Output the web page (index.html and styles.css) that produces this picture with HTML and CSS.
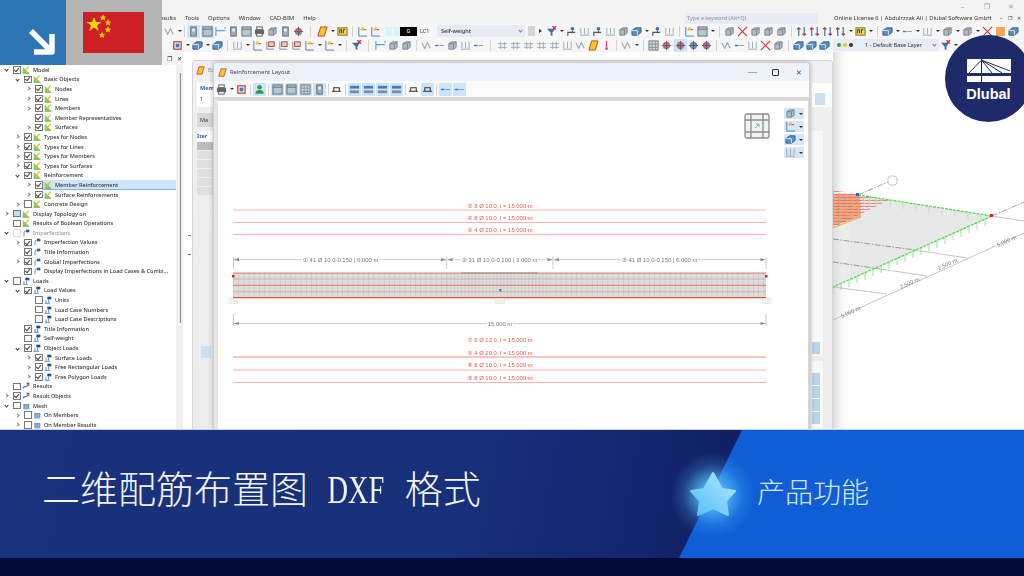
FILE: index.html
```html
<!DOCTYPE html>
<html lang="zh">
<head>
    <meta charset="UTF-8">
    <title>二维配筋布置图 DXF 格式</title>
    <link rel="stylesheet" href="styles.css">
</head>
<body>
    <svg class="defs" width="0" height="0">
        <symbol id="col" viewBox="0 0 12 12"><rect x="3" y="1" width="6" height="10" fill="#9fb0bd" stroke="#5c6b78"/><rect x="4.5" y="3" width="3" height="3" fill="#e4edf3"/></symbol>
        <symbol id="grid" viewBox="0 0 12 12"><rect x="1" y="1" width="10" height="10" fill="#b7c6d2" stroke="#5c6b78"/><path d="M1 3.5h10" stroke="#5c6b78"/></symbol>
        <symbol id="beam" viewBox="0 0 12 12"><path d="M1 1v10M1 5h10M11 1v2" fill="none" stroke="#5f9fd1" stroke-width="1.2"/></symbol>
        <symbol id="box" viewBox="0 0 12 12"><path d="M2 4l3-2h5v6l-3 2H2z" fill="#aebac4" stroke="#7a8894"/><path d="M2 4h5v6M7 4l3-2" fill="none" stroke="#7a8894"/></symbol>
        <symbol id="blue3d" viewBox="0 0 12 12"><path d="M1 5l4-3h6v5l-4 3H1z" fill="#5b8fc0" stroke="#2f5f8d"/><path d="M1 5h6v5" fill="none" stroke="#dbe8f3"/></symbol>
        <symbol id="print" viewBox="0 0 12 12"><rect x="3" y="1" width="6" height="3" fill="#fff" stroke="#555"/><rect x="1" y="4" width="10" height="5" fill="#666"/><rect x="3" y="8" width="6" height="3" fill="#fff" stroke="#555"/></symbol>
        <symbol id="shape" viewBox="0 0 12 12"><path d="M4 1h7l-3 10H1z" fill="#f0c92c" stroke="#d2382b"/></symbol>
        <symbol id="ybox" viewBox="0 0 12 12"><rect x="1" y="2" width="10" height="8" fill="#f4d65a" stroke="#7a6a20"/><path d="M3 8V4h2v4M7 8V4h2" fill="none" stroke="#333"/></symbol>
        <symbol id="axes" viewBox="0 0 12 12"><path d="M2 1v10h9" fill="none" stroke="#3f7fb6"/><path d="M4 4h6" stroke="#d2382b"/><circle cx="6" cy="3" r="1.6" fill="#f0c92c"/></symbol>
        <symbol id="filter" viewBox="0 0 12 12"><path d="M1 3h9L7 7v4L5 10V7z" fill="#2f73b5"/><path d="M7 0l4 4M11 0L7 4" stroke="#e02a24" stroke-width="1.4"/></symbol>
        <symbol id="user" viewBox="0 0 12 12"><circle cx="7" cy="3" r="2" fill="#2f73b5"/><path d="M2 11V7h8M7 5v3" fill="none" stroke="#556" stroke-width="1.2"/></symbol>
        <symbol id="green" viewBox="0 0 12 12"><circle cx="6" cy="3.500" r="2.500" fill="#2f9a4a"/><path d="M1.500 10.500c0-3 2-4 4.500-4s4.500 1 4.500 4z" fill="#2f9a4a"/></symbol>
        <symbol id="ticks" viewBox="0 0 12 12"><path d="M2 2v7M6 2v7M10 2v7M1 10h10" fill="none" stroke="#99a7b2"/></symbol>
        <symbol id="xyz" viewBox="0 0 12 12"><path d="M3 1v10M9 1v10" stroke="#3f7fb6" stroke-width="1.4"/><path d="M1 3h4M7 9h4" stroke="#d2382b" stroke-width="1.4"/></symbol>
        <symbol id="frame" viewBox="0 0 12 12"><rect x="2" y="2" width="8" height="8" fill="#eef3f7" stroke="#c8352a" stroke-width="1.3"/><rect x="4" y="4" width="4" height="4" fill="#3f7fb6"/></symbol>
        <symbol id="dims" viewBox="0 0 12 12"><path d="M2 2v8h8" fill="none" stroke="#7a8894"/><rect x="4" y="2" width="6" height="5" fill="#c9d6df" stroke="#c8352a"/></symbol>
        <symbol id="zig" viewBox="0 0 12 12"><path d="M1 3l3 6 3-6 3 6" fill="none" stroke="#9aa6b0" stroke-width="1.2"/></symbol>
        <symbol id="eqs" viewBox="0 0 12 12"><path d="M1 4h10M1 8h10M4 2v8M8 2v8" fill="none" stroke="#a0aab3"/></symbol>
        <symbol id="cross" viewBox="0 0 12 12"><path d="M1 1l10 10M11 1L1 11" stroke="#d2382b" stroke-width="1.2"/></symbol>
        <symbol id="mesh" viewBox="0 0 12 12"><rect x="1" y="1" width="10" height="10" fill="#d2d8de" stroke="#6a7884"/><path d="M1 4.500h10M1 8h10M4.500 1v10M8 1v10" stroke="#6a7884" stroke-width=".7"/></symbol>
        <symbol id="bars" viewBox="0 0 12 12"><rect x="1" y="2" width="10" height="3" fill="#3f7fb6"/><rect x="1" y="7" width="10" height="3" fill="#7a8ea0"/></symbol>
        <symbol id="pink" viewBox="0 0 12 12"><path d="M6 1v7" stroke="#e0407c" stroke-width="1.4"/><circle cx="6" cy="9.500" r="1.500" fill="#e0407c"/></symbol>
        <symbol id="star3d" viewBox="0 0 12 12"><circle cx="6" cy="6" r="4" fill="#5b8fc0"/><path d="M1 6h10M6 1v10" stroke="#c8352a"/></symbol>
        <symbol id="wbeam" viewBox="0 0 12 12"><path d="M1 8h10M3 8V4h6v4" fill="none" stroke="#333" stroke-width="1.1"/></symbol>
        <symbol id="dash" viewBox="0 0 12 12"><path d="M1 6h4" stroke="#3f7fb6" stroke-width="1.5"/><path d="M6 6h5" stroke="#8a97a2"/></symbol>
        <symbol id="tree-model" viewBox="0 0 12 12"><path d="M1 1v10h10z" fill="#8ecb5c"/><path d="M1 11h10" stroke="#4e9a3a"/><path d="M5 7l5-6" stroke="#e8b820" stroke-width="2"/></symbol>
        <symbol id="tree-imp" viewBox="0 0 12 12"><path d="M3 11V6a3 3 0 0 1 3-3" fill="none" stroke="#6a8ea8" stroke-width="1.4"/><rect x="6" y="1" width="5" height="4" fill="#2d5f93"/></symbol>
        <symbol id="tree-load" viewBox="0 0 12 12"><path d="M1 11h8M3 11V6" fill="none" stroke="#3f7fb6" stroke-width="1.2"/><rect x="5" y="1" width="6" height="4" fill="#234f86"/><path d="M7 5v5" stroke="#234f86"/></symbol>
        <symbol id="tree-res" viewBox="0 0 12 12"><path d="M1 9c3-3 6-3 10-4" fill="none" stroke="#2f73b5" stroke-width="1.6"/><rect x="7" y="1" width="4" height="3" fill="#d2382b"/></symbol>
        <symbol id="tree-mesh" viewBox="0 0 12 12"><rect x="2" y="3" width="9" height="8" fill="#5d92c0"/><path d="M2 6h9M2 9h9M5 3v8M8 3v8" stroke="#cfe0ee" stroke-width=".6"/></symbol>
    </svg>

    <div class="screen">
        <div class="titlebar">
            <span class="winbtn">&#8211;</span>
            <span class="winbtn">&#10064;</span>
            <span class="winbtn">&#10005;</span>
        </div>
        <div class="menubar">
            <nav class="menu"><span>esults</span><span>Tools</span><span>Options</span><span>Window</span><span>CAD-BIM</span><span>Help</span></nav>
            <div class="search">Type a keyword (Alt+Q)</div>
            <div class="license">Online License 6 | Abdulrzzak Ali | Dlubal Software GmbH</div>
            <div class="license-btns"><span>&#8211;</span><span>&#10064;</span><span>&#10005;</span></div>
        </div>

        <div class="toolbar row-one">
            <svg class="ic"><use href="#zig"/></svg><i class="dd"></i><i class="sep tight"></i>
            <svg class="ic on"><use href="#col"/></svg><svg class="ic on"><use href="#grid"/></svg>
            <svg class="ic"><use href="#beam"/></svg><svg class="ic"><use href="#col"/></svg><svg class="ic"><use href="#grid"/></svg>
            <svg class="ic"><use href="#print"/></svg><svg class="ic"><use href="#box"/></svg><svg class="ic"><use href="#col"/></svg><svg class="ic"><use href="#star3d"/></svg><i class="sep wide"></i>
            <svg class="ic"><use href="#shape"/></svg><i class="dd"></i><svg class="ic"><use href="#ybox"/></svg><i class="sep"></i>
            <svg class="ic"><use href="#axes"/></svg><svg class="ic"><use href="#axes"/></svg>
            <div class="lc-swatches"><i></i><i></i></div><b class="lc-g">G</b><span class="lc-name">LC1</span>
            <div class="combo lc-combo">Self-weight<i class="chev"></i></div>
            <i class="step grey"></i><i class="step"></i>
            <svg class="ic"><use href="#filter"/></svg><i class="dd"></i>
            <svg class="ic"><use href="#user"/></svg><svg class="ic"><use href="#ticks"/></svg><svg class="ic"><use href="#user"/></svg><svg class="ic"><use href="#ticks"/></svg><svg class="ic"><use href="#box"/></svg><svg class="ic"><use href="#blue3d"/></svg><i class="dd"></i>
            <svg class="ic"><use href="#user"/></svg><svg class="ic"><use href="#ticks"/></svg><i class="sep"></i>
            <svg class="ic"><use href="#axes"/></svg><svg class="ic"><use href="#grid"/></svg><i class="dd"></i><i class="sep"></i>
            <svg class="ic"><use href="#box"/></svg><svg class="ic"><use href="#cross"/></svg><svg class="ic"><use href="#box"/></svg><svg class="ic"><use href="#box"/></svg><svg class="ic"><use href="#box"/></svg><i class="sep"></i>
            <svg class="ic"><use href="#xyz"/></svg><svg class="ic"><use href="#xyz"/></svg><svg class="ic"><use href="#xyz"/></svg><svg class="ic"><use href="#xyz"/></svg><i class="dd"></i>
            <svg class="ic"><use href="#ybox"/></svg><i class="dd"></i><i class="sep"></i>
            <svg class="ic"><use href="#blue3d"/></svg><i class="dd"></i><svg class="ic"><use href="#dash"/></svg><i class="dd"></i><svg class="ic"><use href="#ticks"/></svg><i class="dd"></i><svg class="ic"><use href="#box"/></svg><i class="dd"></i><svg class="ic"><use href="#box"/></svg><i class="dd"></i>
            <svg class="ic"><use href="#cross"/></svg><i class="orange"></i><svg class="ic"><use href="#blue3d"/></svg>
        </div>

        <div class="toolbar row-two">
            <svg class="ic"><use href="#frame"/></svg><i class="dd"></i>
            <svg class="ic"><use href="#blue3d"/></svg><i class="dd"></i><svg class="ic"><use href="#blue3d"/></svg><i class="sep"></i>
            <svg class="ic"><use href="#ticks"/></svg><i class="dd"></i>
            <svg class="ic"><use href="#axes"/></svg><svg class="ic"><use href="#dims"/></svg><svg class="ic"><use href="#dims"/></svg><svg class="ic"><use href="#dims"/></svg><svg class="ic"><use href="#axes"/></svg><i class="dd"></i><svg class="ic"><use href="#axes"/></svg><i class="dd"></i><i class="sep"></i>
            <svg class="ic"><use href="#filter"/></svg><i class="sep wide"></i>
            <svg class="ic"><use href="#beam"/></svg><svg class="ic"><use href="#box"/></svg><svg class="ic"><use href="#box"/></svg><i class="sep"></i>
            <svg class="ic"><use href="#zig"/></svg><svg class="ic"><use href="#dash"/></svg><svg class="ic"><use href="#box"/></svg><svg class="ic"><use href="#ticks"/></svg><svg class="ic"><use href="#dash"/></svg><i class="sep wide"></i>
            <svg class="ic"><use href="#eqs"/></svg><svg class="ic"><use href="#eqs"/></svg><svg class="ic"><use href="#eqs"/></svg><svg class="ic"><use href="#eqs"/></svg><svg class="ic"><use href="#eqs"/></svg><svg class="ic"><use href="#ticks"/></svg><svg class="ic"><use href="#zig"/></svg><svg class="ic"><use href="#shape"/></svg><svg class="ic"><use href="#pink"/></svg><i class="sep"></i>
            <svg class="ic"><use href="#zig"/></svg><i class="dd"></i><i class="sep"></i>
            <svg class="ic"><use href="#mesh"/></svg><svg class="ic"><use href="#star3d"/></svg><svg class="ic on"><use href="#star3d"/></svg><svg class="ic"><use href="#star3d"/></svg><svg class="ic"><use href="#star3d"/></svg><i class="sep"></i>
            <svg class="ic"><use href="#zig"/></svg><svg class="ic"><use href="#dash"/></svg><svg class="ic"><use href="#ticks"/></svg><svg class="ic"><use href="#cross"/></svg><svg class="ic"><use href="#box"/></svg><i class="sep"></i>
            <svg class="ic"><use href="#blue3d"/></svg><svg class="ic"><use href="#blue3d"/></svg><svg class="ic"><use href="#blue3d"/></svg>
            <div class="combo layer-combo"><i class="dot green"></i><i class="dot yellow"></i><i class="dot dark"></i><i class="cyan"></i>1 - Default Base Layer<i class="chev"></i></div>
            <svg class="ic"><use href="#filter"/></svg><i class="dd"></i>
        </div>

        <div class="body">
            <aside class="panel">
                <div class="panel-head"><span>&#10064;</span><span>&#10005;</span></div>
                <ul class="tree">
                    <li class="l0"><b class="open"></b><i class="cb on"></i><svg><use href="#tree-model"/></svg>Model</li>
                    <li class="l1"><b class="open"></b><i class="cb on"></i><svg><use href="#tree-model"/></svg>Basic Objects</li>
                    <li class="l2"><b></b><i class="cb on"></i><svg><use href="#tree-model"/></svg>Nodes</li>
                    <li class="l2"><b></b><i class="cb on"></i><svg><use href="#tree-model"/></svg>Lines</li>
                    <li class="l2"><b></b><i class="cb on"></i><svg><use href="#tree-model"/></svg>Members</li>
                    <li class="l2"><b class="none"></b><i class="cb on"></i><svg><use href="#tree-model"/></svg>Member Representatives</li>
                    <li class="l2"><b></b><i class="cb on"></i><svg><use href="#tree-model"/></svg>Surfaces</li>
                    <li class="l1"><b></b><i class="cb on"></i><svg><use href="#tree-model"/></svg>Types for Nodes</li>
                    <li class="l1"><b></b><i class="cb on"></i><svg><use href="#tree-model"/></svg>Types for Lines</li>
                    <li class="l1"><b></b><i class="cb on"></i><svg><use href="#tree-model"/></svg>Types for Members</li>
                    <li class="l1"><b></b><i class="cb on"></i><svg><use href="#tree-model"/></svg>Types for Surfaces</li>
                    <li class="l1"><b class="open"></b><i class="cb on"></i><svg><use href="#tree-model"/></svg>Reinforcement</li>
                    <li class="l2 current"><b></b><i class="cb on"></i><svg><use href="#tree-model"/></svg>Member Reinforcement</li>
                    <li class="l2"><b></b><i class="cb on"></i><svg><use href="#tree-model"/></svg>Surface Reinforcements</li>
                    <li class="l1"><b></b><i class="cb"></i><svg><use href="#tree-model"/></svg>Concrete Design</li>
                    <li class="l0"><b></b><i class="cb part"></i><svg><use href="#tree-model"/></svg>Display Topology on</li>
                    <li class="l0"><b class="none"></b><i class="cb"></i><svg><use href="#tree-model"/></svg>Results of Boolean Operations</li>
                    <li class="l0 muted"><b class="open"></b><i class="cb off"></i><svg><use href="#tree-imp"/></svg>Imperfections</li>
                    <li class="l1"><b></b><i class="cb on"></i><svg><use href="#tree-imp"/></svg>Imperfection Values</li>
                    <li class="l1"><b class="none"></b><i class="cb on"></i><svg><use href="#tree-imp"/></svg>Title Information</li>
                    <li class="l1"><b></b><i class="cb on"></i><svg><use href="#tree-imp"/></svg>Global Imperfections</li>
                    <li class="l1"><b class="none"></b><i class="cb on"></i><svg><use href="#tree-imp"/></svg>Display Imperfections in Load Cases &amp; Combi...</li>
                    <li class="l0"><b class="open"></b><i class="cb"></i><svg><use href="#tree-load"/></svg>Loads</li>
                    <li class="l1"><b class="open"></b><i class="cb on"></i><svg><use href="#tree-load"/></svg>Load Values</li>
                    <li class="l2"><b class="none"></b><i class="cb"></i><svg><use href="#tree-load"/></svg>Units</li>
                    <li class="l2"><b class="none"></b><i class="cb"></i><svg><use href="#tree-load"/></svg>Load Case Numbers</li>
                    <li class="l2"><b class="none"></b><i class="cb"></i><svg><use href="#tree-load"/></svg>Load Case Descriptions</li>
                    <li class="l1"><b class="none"></b><i class="cb on"></i><svg><use href="#tree-load"/></svg>Title Information</li>
                    <li class="l1"><b class="none"></b><i class="cb"></i><svg><use href="#tree-load"/></svg>Self-weight</li>
                    <li class="l1"><b class="open"></b><i class="cb on"></i><svg><use href="#tree-load"/></svg>Object Loads</li>
                    <li class="l2"><b></b><i class="cb on"></i><svg><use href="#tree-load"/></svg>Surface Loads</li>
                    <li class="l2"><b></b><i class="cb on"></i><svg><use href="#tree-load"/></svg>Free Rectangular Loads</li>
                    <li class="l2"><b></b><i class="cb on"></i><svg><use href="#tree-load"/></svg>Free Polygon Loads</li>
                    <li class="l0"><b class="none"></b><i class="cb"></i><svg><use href="#tree-res"/></svg>Results</li>
                    <li class="l0"><b></b><i class="cb on"></i><svg><use href="#tree-res"/></svg>Result Objects</li>
                    <li class="l0"><b class="open"></b><i class="cb"></i><svg><use href="#tree-mesh"/></svg>Mesh</li>
                    <li class="l1"><b></b><i class="cb"></i><svg><use href="#tree-mesh"/></svg>On Members</li>
                    <li class="l1"><b></b><i class="cb"></i><svg><use href="#tree-mesh"/></svg>On Member Results</li>
                </ul>
                <i class="scroll"></i>
            </aside>

            <main class="workspace">
                <i class="split-tick first"></i><i class="split-tick second"></i>

                <!-- 3d view behind the dialogs, page coordinates -->
                <svg class="view3d" viewBox="833 52 191 378">
                    <defs>
                        <linearGradient id="fade"><stop offset="0" stop-color="#dcdcdc"/><stop offset="1" stop-color="#fff" stop-opacity="0"/></linearGradient>
                        <pattern id="hatch" width="6" height="3" patternUnits="userSpaceOnUse"><path d="M0 3L6 2" stroke="#e0604c" stroke-width=".8"/></pattern>
                    </defs>
                    <polygon points="833,192 992,216 833,287" fill="#e8e8e8"/>
                    <rect x="833" y="52" width="18" height="378" fill="url(#fade)"/>
                    <path d="M833 239L915 250M833 262L880 269M858 195L888 182M992 216L1024 202" stroke="#777" stroke-width=".7" stroke-dasharray="6 1.500 1.500 1.500" fill="none"/>
                    <path d="M915 250L967 258M880 269L927 276M833 287L887 294M992 216L1024 221M833 320L1024 233" stroke="#aaa" stroke-width=".7" fill="none"/>
                    <rect x="888" y="176" width="9" height="9" rx="3" fill="#fff" stroke="#bbb" stroke-width=".8"/>
                    <text class="dim3d" transform="translate(842,318) rotate(-24)">5.000 m</text>
                    <text class="dim3d" transform="translate(901,289) rotate(-24)">2.500 m</text>
                    <text class="dim3d" transform="translate(939,270) rotate(-24)">2.500 m</text>
                    <text class="dim3d" transform="translate(998,247) rotate(-24)">5.000 m</text>
                    <polygon points="833,194 860,194 861,217 833,226" fill="#eda98c"/>
                    <polygon points="833,190 890,200 861,214 833,228" fill="url(#hatch)"/>
                    <path d="M833 212L861 205M833 220L861 213M833 228L861 217" stroke="#e8b050" stroke-width="1"/>
                    <path d="M858 195L992 216L833 287" stroke="#4fd84f" stroke-width="1.300" stroke-dasharray="3 1" fill="none"/>
                    <path d="M833 287v7M841 283v7M849 280v7M857 276v7M865 273v7M873 269v7M881 266v7M889 262v7M897 258v7M905 255v7M913 251v7M921 248v7M929 244v7M937 241v7M945 237v7M953 233v7M961 230v7M969 226v7M977 223v7M985 219v7" stroke="#7be07b" stroke-width=".8"/>
                    <path d="M864 196v7M877 198v7M890 200v7M903 202v7M916 204v7M929 206v7M942 208v7M955 210v7M968 212v7M981 214v7" stroke="#a6e0a6" stroke-width=".7"/>
                    <rect x="856" y="193" width="3" height="3" fill="#2a62d8"/>
                    <rect x="990" y="214" width="3" height="3" fill="#e81c1c"/>
                </svg>

                <!-- dialog behind -->
                <section class="win back-win">
                    <header class="win-title"><svg class="win-icon"><use href="#shape"/></svg>Ed</header>
                    <div class="back-body">
                        <div class="back-left">
                            <div class="back-tab"><b>Mem</b><span>1</span></div>
                            <div class="back-grey">Ma</div>
                            <div class="back-iter">Iter</div>
                            <i class="back-row dark"></i><i class="back-row"></i><i class="back-row"></i><i class="back-row"></i><i class="back-row"></i><i class="back-row"></i>
                            <i class="back-btn"></i>
                        </div>
                        <div class="back-right">
                            <div class="back-top"><i></i></div>
                            <div class="back-col">
                                <i class="blue"></i>
                            </div>
                            <div class="back-col low"><i class="blue"></i><i class="blue"></i><i class="blue"></i><i class="blue"></i></div>
                        </div>
                    </div>
                </section>

                <!-- front dialog -->
                <section class="win front-win">
                    <header class="win-title">
                        <svg class="win-icon"><use href="#shape"/></svg>Reinforcement Layout
                        <div class="win-btns"><span class="min"></span><span class="max"></span><span class="close">&#10005;</span></div>
                    </header>
                    <div class="toolbar win-tools">
                        <svg class="ic"><use href="#print"/></svg><i class="dd"></i><svg class="ic"><use href="#frame"/></svg><i class="sep"></i>
                        <svg class="ic on"><use href="#green"/></svg><i class="sep"></i>
                        <svg class="ic on"><use href="#grid"/></svg><svg class="ic on"><use href="#grid"/></svg><svg class="ic on"><use href="#mesh"/></svg><svg class="ic on"><use href="#col"/></svg><i class="sep"></i>
                        <svg class="ic"><use href="#wbeam"/></svg><i class="sep"></i>
                        <svg class="ic on"><use href="#bars"/></svg><svg class="ic on"><use href="#bars"/></svg><svg class="ic on"><use href="#bars"/></svg><svg class="ic on"><use href="#bars"/></svg><i class="sep"></i>
                        <svg class="ic"><use href="#wbeam"/></svg><svg class="ic on"><use href="#wbeam"/></svg><i class="sep"></i>
                        <svg class="ic on"><use href="#dash"/></svg><svg class="ic on"><use href="#dash"/></svg>
                    </div>
                    <div class="layout-area">
                        <svg class="layout" viewBox="218 100 590 330">
                            <defs>
                                <pattern id="st150" x="233" width="5.200" height="8" patternUnits="userSpaceOnUse"><path d="M.5 0v8" stroke="#cdbcb8" stroke-width=".6"/></pattern>
                                <pattern id="st100" x="446.700" width="3.550" height="8" patternUnits="userSpaceOnUse"><path d="M.5 0v8" stroke="#cdbcb8" stroke-width=".6"/></pattern>
                            </defs>
                            <g class="bar-labels">
                                <text x="500" y="206.500">&#9316; 8 Ø 10.0, l = 15.000 m</text>
                                <text x="500" y="218.500">&#9317; 8 Ø 10.0, l = 15.000 m</text>
                                <text x="500" y="231">&#9315; 4 Ø 20.0, l = 15.000 m</text>
                                <text x="500" y="341">&#9318; 6 Ø 12.0, l = 15.000 m</text>
                                <text x="500" y="353.500">&#9315; 4 Ø 20.0, l = 15.000 m</text>
                                <text x="500" y="366">&#9319; 8 Ø 10.0, l = 15.000 m</text>
                                <text x="500" y="378.500">&#9320; 8 Ø 10.0, l = 15.000 m</text>
                            </g>
                            <path d="M233 209H766" stroke="#f9cfc9" stroke-width="1.500"/>
                            <path d="M233 221.500H766M233 233.500H766M233 369H766M233 381.500H766" stroke="#f6b4ab"/>
                            <path d="M233 356H766" stroke="#ee8e80"/>

                            <path d="M233.500 256v12M446.700 256v12M553 256v12M766 256v12M233.500 313v12M766 313v12" stroke="#bbb" stroke-width=".8"/>
                            <path d="M234 258.700H302M379 258.700H446M447.500 258.700H461M538 258.700H552.500M554 258.700H621M698 258.700H765.500M234 322.500H487M513 322.500H765.500" stroke="#c4c4c4" stroke-width=".8"/>
                            <path d="M234 258.700l5-1.600v3.200zM446 258.700l-5-1.600v3.200zM447.500 258.700l5-1.600v3.200zM552.500 258.700l-5-1.600v3.200zM554 258.700l5-1.600v3.200zM765.500 258.700l-5-1.600v3.200zM234 322.500l5-1.600v3.200zM765.500 322.500l-5-1.600v3.200z" fill="#888"/>
                            <g class="dim-labels">
                                <text x="340.500" y="260.700">&#9312; 41 Ø 10.0-0.150 | 6.000 m</text>
                                <text x="499.500" y="260.700">&#9313; 31 Ø 10.0-0.100 | 3.000 m</text>
                                <text x="659.500" y="260.700">&#9314; 41 Ø 10.0-0.150 | 6.000 m</text>
                                <text x="500" y="324.500">15.000 m</text>
                            </g>

                            <rect x="233" y="272" width="533" height="25" fill="#dedddc"/>
                            <rect x="233" y="272" width="213.700" height="25" fill="url(#st150)"/>
                            <rect x="446.700" y="272" width="106.300" height="25" fill="url(#st100)"/>
                            <rect x="553" y="272" width="213" height="25" fill="url(#st150)"/>
                            <path d="M233 278H766M233 290.700H766" stroke="#b5aaa8" stroke-width=".7"/>
                            <path d="M233 272H766M233 284.300H766" stroke="#df6f5e" stroke-width=".9"/>
                            <path d="M233 296.700H766" stroke="#d9503c" stroke-width="1.200"/>
                            <path d="M461 272H538" stroke="#8a8a8a" stroke-width=".9"/>
                            <g class="supports">
                                <rect x="229" y="297.500" width="9" height="5"/>
                                <rect x="495.500" y="297.500" width="9" height="5"/>
                                <rect x="762" y="297.500" width="9" height="5"/>
                            </g>
                            <rect x="232" y="274" width="2.500" height="2.500" fill="#e81c1c"/>
                            <rect x="765" y="274" width="2.500" height="2.500" fill="#e81c1c"/>
                            <rect x="499" y="288" width="2.500" height="2.500" fill="#2f8fe0"/>
                        </svg>
                        <svg class="cube" viewBox="0 0 26 26"><rect x="1" y="1" width="24" height="24" rx="2" fill="#f1f1f1" stroke="#8d8d8d" stroke-width="1.300"/><path d="M1 7h24M1 19h24M7 1v24M19 1v24" stroke="#8d8d8d" stroke-width="1.300"/><path d="M11 15l4-4m-3 0h3v3" fill="none" stroke="#6fc08a"/></svg>
                        <div class="view-tools">
                            <div><svg class="ic"><use href="#box"/></svg><i class="dd"></i></div>
                            <div><svg class="ic"><use href="#axes"/></svg><i class="dd"></i></div>
                            <div><svg class="ic"><use href="#blue3d"/></svg><i class="dd"></i></div>
                            <div><svg class="ic"><use href="#ticks"/></svg><i class="dd"></i></div>
                        </div>
                    </div>
                </section>
            </main>
        </div>
    </div>

    <footer class="banner">
        <h1 class="banner-title">二维配筋布置图 <span>DXF</span> 格式</h1>
        <div class="feature">
            <svg class="star" viewBox="0 0 100 100">
                <defs>
                    <radialGradient id="glow"><stop offset=".25" stop-color="#58c4ff" stop-opacity=".8"/><stop offset=".6" stop-color="#58c4ff" stop-opacity=".2"/><stop offset=".85" stop-color="#58c4ff" stop-opacity="0"/></radialGradient>
                    <linearGradient id="starfill" x1="0" y1="1" x2="1" y2="0"><stop offset="0" stop-color="#52bdf8"/><stop offset="1" stop-color="#b4e8ff"/></linearGradient>
                </defs>
                <circle cx="50" cy="50" r="50" fill="url(#glow)"/>
                <polygon points="50,28 59,44 72,46 63,56 65,70 50,63 35,70 37,56 28,46 41,44" fill="url(#starfill)" stroke="url(#starfill)" stroke-width="2" stroke-linejoin="round"/>
            </svg>
            <span>产品功能</span>
        </div>
    </footer>
    <div class="banner-foot"></div>

    <!-- overlays on the top corners -->
    <div class="corner">
        <div class="corner-arrow">
            <svg viewBox="0 0 66 65"><path d="M31 31L51 51M34 52H52V34" fill="none" stroke="#fff" stroke-width="5.500" stroke-linejoin="round"/></svg>
        </div>
        <div class="corner-flag">
            <svg viewBox="0 0 61 41" class="flag">
                <rect width="61" height="41" fill="#cc1f26"/>
                <g fill="#f7d500">
                    <polygon points="11,5 13,10 18.500,10 14,13.500 15.800,19 11,15.500 6.200,19 8,13.500 3.500,10 9,10"/>
                    <polygon points="20,2 21,4.500 23.300,4.700 21.500,6 22.200,8.500 20,7.200 17.800,8.500 18.500,6 16.700,4.700 19,4.500"/>
                    <polygon points="25,7 26,9.500 28.300,9.700 26.500,11 27.200,13.500 25,12.200 22.800,13.500 23.500,11 21.700,9.700 24,9.500"/>
                    <polygon points="25,14 26,16.500 28.300,16.700 26.500,18 27.200,20.500 25,19.200 22.800,20.500 23.500,18 21.700,16.700 24,16.500"/>
                    <polygon points="19,19.500 20,22 22.300,22.200 20.500,23.500 21.200,26 19,24.700 16.800,26 17.500,23.500 15.700,22.200 18,22"/>
                </g>
            </svg>
        </div>
    </div>
    <div class="brand">
        <svg class="brand-mark" viewBox="0 0 44 23">
            <rect width="44" height="14" fill="#fff"/>
            <rect y="17" width="44" height="6" fill="#fff"/>
            <path d="M14.500 0V23M14.500 1L2 14M14.500 1L25 14M14.500 1L35 14M14.500 1L43 12" stroke="#1f2a6b" stroke-width="1"/>
        </svg>
        <span>Dlubal</span>
    </div>
</body>
</html>
```

FILE: styles.css
```css
/* page */
* {
    box-sizing: border-box;
}

html, body {
    margin: 0;
    padding: 0;
    width: 1024px;
    height: 576px;
    overflow: hidden;
    background: #fff;
}

body {
    position: relative;
    font-family: "Noto Sans", "Liberation Sans", sans-serif;
    color: #333;
}

.defs {
    position: absolute;
}

/* app screenshot */
.screen {
    height: 430px;
    overflow: hidden;
    display: flex;
    flex-direction: column;
    border-bottom: 1px solid #c5d2e6;
    filter: blur(.4px);
}

.titlebar {
    height: 12px;
    background: #f3f3f3;
    display: flex;
    justify-content: flex-end;
    align-items: center;
    gap: 15px;
    padding-right: 9px;
    color: #999;
}

.winbtn {
    width: 9px;
    font-size: 7px;
    line-height: 1;
    text-align: center;
}

.menubar {
    height: 12px;
    background: #f3f3f3;
    display: flex;
    align-items: center;
    font-size: 6px;
    padding-left: 160px;
}

.menu {
    display: flex;
    gap: 9px;
    width: 525px;
    font-size: 5.800px;
}

.search {
    width: 133px;
    height: 11px;
    line-height: 11px;
    padding-left: 2px;
    background: #e9ebf4;
    color: #8a8fa6;
    font-size: 5.500px;
}

.license {
    margin-left: 16px;
    font-size: 5.800px;
    white-space: nowrap;
    width: 160px;
}

.license-btns {
    display: flex;
    gap: 5px;
    font-size: 5px;
    margin-left: 6px;
}

/* toolbars */
.toolbar {
    display: flex;
    align-items: center;
    flex-shrink: 0;
    height: 14px;
    background: #f6f6f6;
    white-space: nowrap;
}

.row-one {
    padding-left: 163px;
}

.row-two {
    padding-left: 171px;
}

.ic {
    flex: none;
    width: 11px;
    height: 11px;
    margin: 0 1px;
}

.ic.on {
    background: #cde4f8;
    width: 13px;
    height: 13px;
    margin: 0 .5px;
    padding: 1px;
    border-radius: 1px;
}

.dd {
    flex: none;
    width: 0;
    height: 0;
    margin: 0 1.500px;
    border: 2px solid transparent;
    border-top: 2.500px solid #333;
    border-bottom: 0;
}

.sep {
    flex: none;
    width: 1px;
    height: 11px;
    margin: 0 3px;
    background: #d2d2d2;
}

.sep.tight {
    margin: 0 1px;
}

.sep.wide {
    margin: 0 5px;
}

.lc-swatches {
    display: flex;
    gap: 1px;
    margin-left: 3px;
}

.lc-swatches i {
    width: 7px;
    height: 9px;
    background: #d6f5fb;
}

.lc-g {
    width: 17px;
    height: 9px;
    background: #000;
    color: #fff;
    font-size: 5.500px;
    line-height: 9px;
    text-align: center;
    font-weight: 400;
}

.lc-name {
    margin-left: 3px;
    width: 17px;
    font-size: 5.500px;
}

.combo {
    position: relative;
    height: 12px;
    line-height: 12px;
    background: #e9ebf4;
    font-size: 5.600px;
    flex: none;
}

.lc-combo {
    width: 88px;
    padding-left: 4px;
    font-weight: 500;
}

.chev {
    position: absolute;
    right: 3px;
    top: 3.500px;
    width: 3px;
    height: 3px;
    border-right: 1px solid #777;
    border-bottom: 1px solid #777;
    transform: rotate(45deg);
}

.step {
    flex: none;
    width: 0;
    height: 0;
    margin: 0 3px;
    border: 2px solid transparent;
    border-left: 3px solid #333;
    border-right: 0;
}

.step.grey {
    width: 7px;
    height: 10px;
    margin: 0 1px 0 3px;
    background: #d4d4d4;
    border: 0;
}

.orange {
    flex: none;
    width: 9px;
    height: 9px;
    margin: 0 2px;
    background: #f0a65c;
}

.layer-combo {
    display: flex;
    align-items: center;
    width: 106px;
    margin-left: 2px;
    padding-left: 4px;
}

.dot {
    width: 4px;
    height: 4px;
    margin-right: 2px;
    border-radius: 50%;
}

.dot.green { background: #2aa52a; }
.dot.yellow { background: #e8c820; }
.dot.dark { background: #333; }

.cyan {
    width: 5px;
    height: 8px;
    margin: 0 4px 0 1px;
    background: #d6f5fb;
}

/* main area */
.body {
    flex: 1;
    display: flex;
    min-height: 0;
}

.panel {
    position: relative;
    width: 183px;
    flex: none;
    background: #fff;
    border-right: 7px solid #f0f0f0;
}

.panel-head {
    height: 13px;
    margin-right: -7px;
    display: flex;
    justify-content: flex-end;
    align-items: center;
    gap: 5px;
    padding-right: 1px;
    font-size: 6px;
    background: #f4f4f4;
}

.tree {
    list-style: none;
    margin: 0;
    padding: 0;
    font-size: 5.550px;
    font-weight: 500;
}

.tree li {
    display: flex;
    align-items: center;
    height: 9.600px;
    white-space: nowrap;
}

.tree .l0 { padding-left: 3px; }
.tree .l1 { padding-left: 14px; }
.tree .l2 { padding-left: 25px; }

.tree b {
    flex: none;
    width: 3px;
    height: 3px;
    margin: 0 5px 0 2px;
    border-right: 1px solid #777;
    border-top: 1px solid #777;
    transform: rotate(45deg);
}

.tree b.open {
    transform: rotate(135deg);
    border-color: #333;
}

.tree b.none {
    visibility: hidden;
}

.cb {
    flex: none;
    position: relative;
    width: 7.500px;
    height: 7.500px;
    background: #fff;
    border: 1px solid #777;
}

.cb.on::after {
    content: "";
    position: absolute;
    left: 1.200px;
    top: -.200px;
    width: 2.400px;
    height: 4px;
    border-right: 1px solid #444;
    border-bottom: 1px solid #444;
    transform: rotate(40deg);
}

.cb.part {
    background: #bcdcf4;
    border-color: #5a7f9c;
}

.cb.off {
    border-color: #ddd;
}

.tree svg {
    flex: none;
    width: 8px;
    height: 8px;
    margin: 0 3px 0 1.500px;
}

.tree .muted {
    color: #999;
}

.tree .current {
    background: linear-gradient(90deg, #fff 42px, transparent 42px), linear-gradient(#7db9e8, #7db9e8) bottom / 100% 1px no-repeat, #cce5f9;
}

.scroll {
    position: absolute;
    right: -5px;
    top: 21px;
    width: 1px;
    height: 250px;
    background: #888;
}

.workspace {
    position: relative;
    flex: 1;
    background: #fff;
}

.split-tick {
    position: absolute;
    left: 5px;
    width: 3px;
    height: 1px;
    background: #777;
}

.split-tick.first { top: 183px; }
.split-tick.second { top: 202px; }

.view3d {
    position: absolute;
    left: 650px;
    top: 0;
    width: 191px;
    height: 378px;
}

.dim3d {
    font-size: 5.500px;
    fill: #777;
}

/* dialogs */
.win {
    position: absolute;
    display: flex;
    flex-direction: column;
    overflow: hidden;
    border-radius: 4px 4px 0 0;
}

.win-title {
    display: flex;
    align-items: center;
    height: 18px;
    flex: none;
    padding-left: 2px;
    background: #eef2fb;
    font-size: 5.800px;
}

.win-icon {
    width: 9px;
    height: 9px;
    margin-right: 3px;
}

.back-win {
    left: 9px;
    top: 8px;
    width: 641px;
    bottom: 0;
    background: #e2e2e2;
    border: 1px solid #d6d6d6;
    border-bottom: 0;
}

.back-win .win-title {
    padding-left: 3px;
    background: #f0f0f2;
    color: #888;
}

.back-body {
    flex: 1;
    display: flex;
    justify-content: space-between;
    background: linear-gradient(#f0f0f0, #ececec);
}

.back-left {
    width: 22px;
    display: flex;
    flex-direction: column;
    padding-left: 4px;
    font-size: 6px;
}

.back-tab {
    height: 24px;
    margin-top: 4px;
    padding-left: 3px;
    background: #fff;
    line-height: 11px;
}

.back-tab b {
    display: block;
    color: #3b5a96;
    font-size: 5.500px;
}

.back-tab span {
    font-size: 5.500px;
}

.back-grey {
    height: 14px;
    margin-top: 6px;
    padding-left: 3px;
    background: #d9d9d9;
    font-size: 5.500px;
    line-height: 14px;
}

.back-iter {
    height: 11px;
    margin-top: 4px;
    background: #fff;
    color: #3b5a96;
    font-size: 5.500px;
    line-height: 11px;
    font-weight: 700;
}

.back-row {
    display: block;
    height: 8px;
    background: #e0e0e0;
    margin-bottom: 1px;
}

.back-row.dark {
    background: #bdbdbd;
}

.back-btn {
    width: 10px;
    height: 12px;
    margin: 150px 0 0 4px;
    background: #cde0ee;
}

.back-right {
    width: 24px;
    display: flex;
    flex-direction: column;
    padding-left: 4px;
}

.back-top {
    height: 24px;
    margin-top: 4px;
    padding: 10px 0 0 3px;
    background: #fff;
}

.back-top i {
    display: block;
    width: 10px;
    height: 12px;
    background: #cde0ee;
}

.back-col {
    height: 225px;
    margin: 24px 9px 0 0;
    padding-top: 211px;
    background: #f8f8f8;
}

.back-col.low {
    height: 70px;
    margin-top: 5px;
    padding-top: 12px;
}

.back-col i {
    display: block;
    width: 8px;
    height: 12px;
    margin-bottom: 1px;
    background: #b9d4e8;
}

.front-win {
    left: 30px;
    top: 10px;
    width: 597px;
    bottom: 0;
    background: #fff;
    border: 1px solid #cfcfcf;
    border-bottom: 0;
    box-shadow: 0 0 5px rgba(0, 0, 0, .25);
}

.front-win .win-title {
    padding-left: 4px;
    position: relative;
    height: 18px;
    color: #444;
}

.win-btns {
    display: flex;
    align-items: center;
    gap: 15px;
    margin-left: auto;
    padding-right: 6px;
}

.win-btns span {
    display: block;
    width: 9px;
    text-align: center;
    font-size: 7px;
}

.win-btns .min {
    height: 1px;
    background: #aaa;
}

.win-btns .max {
    height: 7px;
    width: 7px;
    border: 1px solid #333;
    border-radius: 1px;
}

.win-tools {
    height: 16px;
    padding-left: 1px;
    background: #fbfbfb;
}

.win-tools .sep {
    margin: 0 1.500px;
}

.layout-area {
    position: relative;
    flex: 1;
    border-top: 4px solid #d9d9d9;
    border-left: 4px solid #e6e6e6;
    border-right: 1px solid #d9d9d9;
}

.layout {
    display: block;
    width: 590px;
    height: 330px;
}

.bar-labels text,
.dim-labels text {
    font-family: "Liberation Sans", "DejaVu Sans", sans-serif;
    font-size: 5.900px;
    text-anchor: middle;
}

.bar-labels text { fill: #e0604c; }
.dim-labels text { fill: #777; }

.supports rect {
    fill: #f3f3e4;
    stroke: #dedede;
    stroke-width: .6;
}

.cube {
    position: absolute;
    left: 526px;
    top: 12px;
    width: 26px;
    height: 26px;
}

.view-tools {
    position: absolute;
    left: 566px;
    top: 7px;
    display: flex;
    flex-direction: column;
    gap: 2px;
}

.view-tools div {
    display: flex;
    align-items: center;
    width: 20px;
    height: 11px;
    background: #d5e7f7;
}

/* banner */
.banner {
    position: relative;
    display: flex;
    align-items: center;
    height: 128px;
    background: linear-gradient(100deg, #1a327c 0, #18307a 45%, #0f1d62 75%);
    overflow: hidden;
}

.banner-title {
    margin: 0 0 11px 42px;
    font-family: "Noto Sans CJK SC", sans-serif;
    font-size: 38px;
    line-height: 50px;
    font-weight: 300;
    color: #f2f4fb;
    white-space: pre;
}

/* narrow tall latin, like a simsun half width */
.banner-title span {
    display: inline-block;
    font-family: "Liberation Serif", serif;
    font-size: 40px;
    transform: scaleX(.71);
}

.feature {
    position: absolute;
    left: 0;
    top: 0;
    right: 0;
    bottom: 0;
    display: flex;
    align-items: center;
    padding: 0 0 0 663px;
}

.feature::before {
    content: "";
    position: absolute;
    left: 679px;
    top: 0;
    right: 0;
    bottom: 0;
    background: #0f5ed5;
    clip-path: polygon(63px 0, 100% 0, 100% 100%, 0 100%);
}

.star {
    position: relative;
    flex: none;
    width: 100px;
    height: 100px;
    margin-top: 2px;
}

.feature span {
    position: relative;
    margin: 0 0 7px -6px;
    font-family: "Noto Sans CJK SC", sans-serif;
    font-size: 28px;
    font-weight: 300;
    color: #d8e6f8;
}

.banner-foot {
    height: 18px;
    background: #020b3a;
}

/* overlays */
.corner {
    position: absolute;
    left: 0;
    top: 0;
    display: flex;
    width: 162px;
    height: 65px;
    filter: blur(.3px);
}

.corner-arrow {
    width: 66px;
    background: #2e75b6;
}

.corner-arrow svg {
    display: block;
    width: 66px;
    height: 65px;
}

.corner-flag {
    flex: 1;
    display: flex;
    align-items: center;
    padding-left: 17px;
    background: #b5b5b5;
}

.flag {
    width: 61px;
    height: 41px;
}

.brand {
    position: absolute;
    left: 945px;
    top: 35px;
    width: 87px;
    height: 87px;
    padding-top: 24px;
    border-radius: 50%;
    background: #1f2a6b;
    color: #fff;
    display: flex;
    flex-direction: column;
    align-items: center;
    font-family: "Liberation Sans", sans-serif;
    font-weight: 700;
    font-size: 14.500px;
    line-height: 1;
}

.brand-mark {
    width: 44px;
    height: 23px;
    margin-bottom: 5px;
}
```
